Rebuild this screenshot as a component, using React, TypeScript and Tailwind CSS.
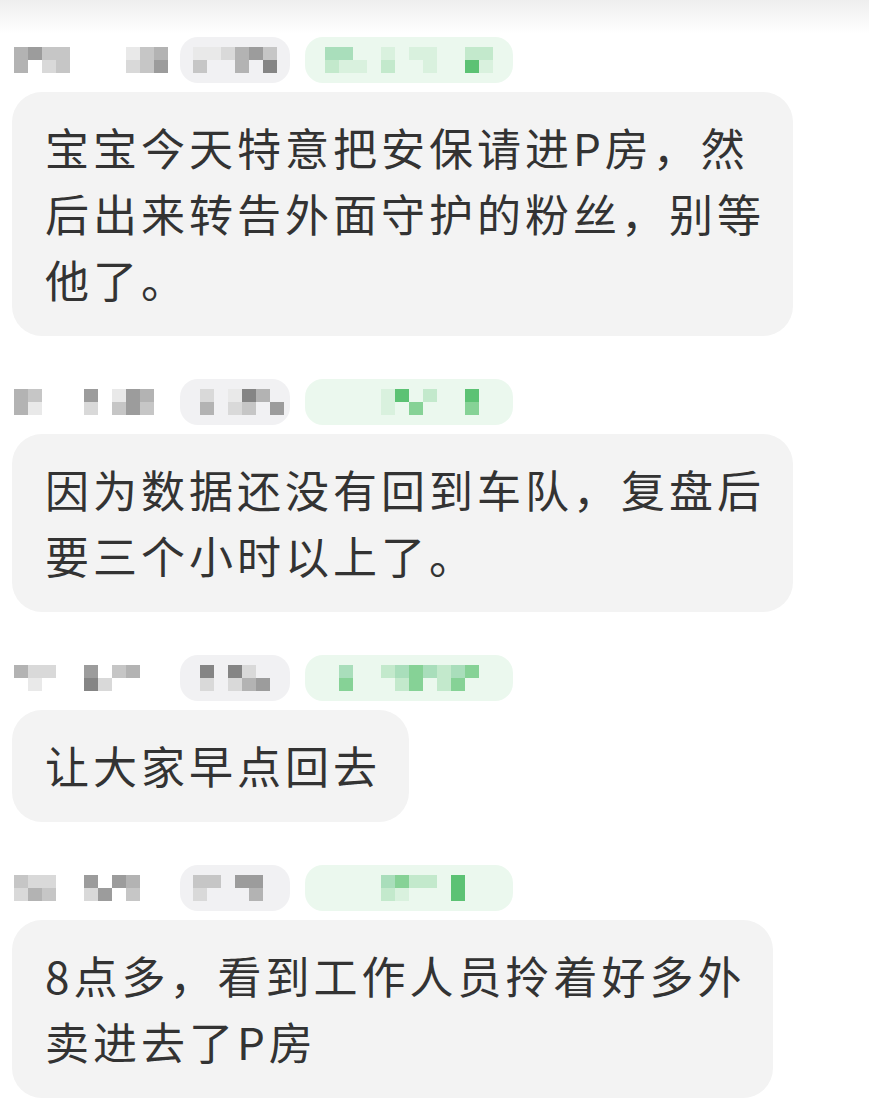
import React from 'react';

// shade letters -> full class names, so Tailwind sees every one
const gray: Record<string, string> = {
  a: 'bg-[#858585]',
  b: 'bg-[#9c9c9c]',
  c: 'bg-[#b3b3b3]',
  d: 'bg-[#c6c6c6]',
  e: 'bg-[#d9d9d9]',
  f: 'bg-[#e9e9e9]',
  _: 'bg-transparent',
};

const green: Record<string, string> = {
  a: 'bg-[#5cc274]',
  b: 'bg-[#86d296]',
  c: 'bg-[#a9debb]',
  d: 'bg-[#c3e9cc]',
  e: 'bg-[#d9f1de]',
  _: 'bg-transparent',
};

interface MosaicProps {
  rows: string[];
  palette: Record<string, string>;
}

function Mosaic({ rows, palette }: MosaicProps) {
  return (
    <div className="flex flex-col">
      {rows.map((row, i) => (
        <div key={i} className="flex">
          {row.split('').map((ch, j) => (
            <div key={j} className={`w-[14px] h-[13px] ${palette[ch]}`} />
          ))}
        </div>
      ))}
    </div>
  );
}

interface HeaderBlocks {
  name: string[];
  badge: string[];
  tag: string[];
}

function MessageHeader({ name, badge, tag }: HeaderBlocks) {
  return (
    <div className="flex items-center h-[46px]">
      <div className="w-[180px] pl-[14px]">
        <Mosaic rows={name} palette={gray} />
      </div>
      <div className="w-[110px] h-[46px] rounded-[18px] bg-[#f1f1f3] flex items-center justify-center">
        <Mosaic rows={badge} palette={gray} />
      </div>
      <div className="ml-[15px] w-[208px] h-[46px] rounded-[18px] bg-[#ebf8ee] flex items-center justify-center">
        <Mosaic rows={tag} palette={green} />
      </div>
    </div>
  );
}

interface Message extends HeaderBlocks {
  lines: string[];
}

const messages: Message[] = [
  {
    name: ['cbdd____fdc', 'c_ed____edb'],
    badge: ['ffecbd', 'd__c_a'],
    tag: ['cc__e_ee__dd', 'dee_d__e__ae'],
    lines: ['宝宝今天特意把安保请进P房，然', '后出来转告外面守护的粉丝，别等', '他了。'],
  },
  {
    name: ['cd___b_fbc_', 'cf___e_dbd_'],
    badge: ['_e_fac', '_c_ed_b'],
    tag: ['____ea_d__a_', '____e_b___b_'],
    lines: ['因为数据还没有回到车队，复盘后', '要三个小时以上了。'],
  },
  {
    name: ['cee__b_dc__', '_f___ae____'],
    badge: ['a_ae_', 'e_ecb'],
    tag: ['_c__dcbcdcb_', '_b___db_db__'],
    lines: ['让大家早点回去'],
  },
  {
    name: ['dee__b_bc__', 'ecd__eb_d__'],
    badge: ['dd_bb_', 'e___c_'],
    tag: ['____cbdd_a__', '____de___a__'],
    lines: ['8点多，看到工作人员拎着好多外', '卖进去了P房'],
  },
];

export default function App() {
  return (
    <div
      className="min-h-[1116px] bg-[linear-gradient(to_bottom,#eeeeee_0px,#ffffff_34px)] pt-[37px] pl-[12px] flex flex-col gap-[43px]"
      style={{ fontFamily: '"Noto Sans CJK SC", "Noto Sans", sans-serif' }}
    >
      {messages.map((m, i) => (
        <div key={i} className="flex flex-col gap-[9px]">
          <div className="-ml-[12px]">
            <MessageHeader name={m.name} badge={m.badge} tag={m.tag} />
          </div>
          <div className="w-fit rounded-[30px] bg-[#f3f3f3] pl-[33px] pr-[28px] pt-[22px] pb-[24px] text-[44px] leading-[66px] tracking-[4px] text-[#333333]">
            {m.lines.map((line, j) => (
              <div key={j} className="whitespace-nowrap">
                {line}
              </div>
            ))}
          </div>
        </div>
      ))}
    </div>
  );
}
